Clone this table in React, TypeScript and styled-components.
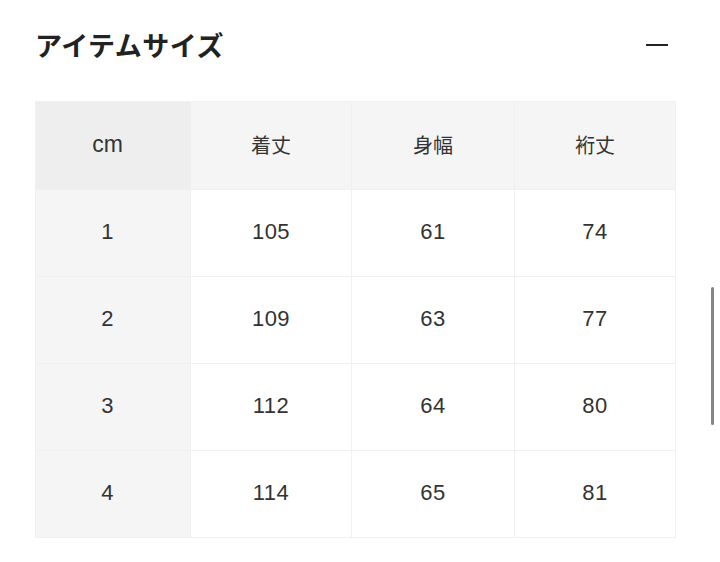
import React from "react";
import styled, { createGlobalStyle } from "styled-components";

const Global = createGlobalStyle`
  html, body { margin: 0; padding: 0; background: #fff; }
  body {
    font-family: "Noto Sans CJK JP", "Noto Sans", sans-serif;
    color: #333;
    overflow: hidden;
  }
`;

const Page = styled.div`
  position: relative;
  width: 720px;
  height: 562px;
  padding: 0 45px 0 35px;
  box-sizing: border-box;
`;

const Header = styled.div`
  display: flex;
  align-items: center;
  justify-content: space-between;
  height: 90px;
  padding-bottom: 1px;
  box-sizing: border-box;
`;

const Title = styled.h2`
  margin: 0;
  font-size: 27px;
  font-weight: 700;
  color: #222;
  letter-spacing: 0.5px;
  line-height: 1;
  margin-top: -1px;
`;

const Toggle = styled.button`
  border: none;
  background: none;
  padding: 0;
  width: 24px;
  height: 24px;
  display: flex;
  align-items: center;
  justify-content: center;
  margin-right: 6px;
  cursor: pointer;
`;

const Bar = styled.span`
  display: block;
  width: 22px;
  height: 2px;
  background: #222;
`;

const Table = styled.table`
  width: 640px;
  border-collapse: collapse;
  table-layout: fixed;
  margin-top: 11px;
`;

const Cell = styled.td<{ $head?: boolean; $first?: boolean; $cjk?: boolean }>`
  height: ${(p) => (p.$head ? "88px" : "87px")};
  padding: 0 ${(p) => (p.$first ? "11px" : "0")} 3px 0;
  box-sizing: border-box;
  text-align: center;
  vertical-align: middle;
  font-size: ${(p) => (p.$cjk ? "20px" : p.$head ? "23px" : "22px")};
  font-family: "Liberation Sans", "Noto Sans CJK JP", sans-serif;
  font-weight: 400;
  color: #333;
  border: 1px solid #f0f0f0;
  letter-spacing: ${(p) => (p.$head ? "0" : "0.5px")};
  background: ${(p) =>
    p.$head && p.$first ? "#eeeeee" : p.$head || p.$first ? "#f5f5f5" : "#ffffff"};
`;

const Scroll = styled.div`
  position: absolute;
  right: 6px;
  top: 287px;
  width: 3px;
  height: 138px;
  border-radius: 2px;
  background: #858585;
`;

const cols = [155, 161, 163, 161];
const head = ["cm", "着丈", "身幅", "裄丈"];
const rows = [
  ["1", "105", "61", "74"],
  ["2", "109", "63", "77"],
  ["3", "112", "64", "80"],
  ["4", "114", "65", "81"],
];

export default function App() {
  return (
    <>
      <Global />
      <Page>
        <Header>
          <Title>アイテムサイズ</Title>
          <Toggle aria-label="閉じる">
            <Bar />
          </Toggle>
        </Header>
        <Table>
          <colgroup>
            {cols.map((w, i) => (
              <col key={i} style={{ width: w }} />
            ))}
          </colgroup>
          <thead>
            <tr>
              {head.map((h, i) => (
                <Cell as="th" key={h} $head $first={i === 0} $cjk={i > 0}>
                  {h}
                </Cell>
              ))}
            </tr>
          </thead>
          <tbody>
            {rows.map((r) => (
              <tr key={r[0]}>
                {r.map((v, i) => (
                  <Cell key={i} $first={i === 0}>
                    {v}
                  </Cell>
                ))}
              </tr>
            ))}
          </tbody>
        </Table>
        <Scroll />
      </Page>
    </>
  );
}
